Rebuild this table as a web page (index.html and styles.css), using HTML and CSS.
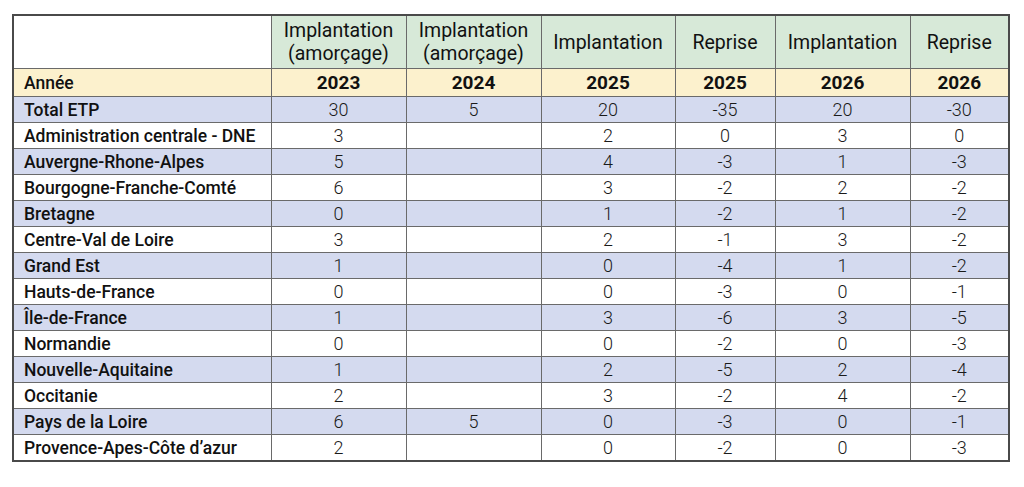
FILE: index.html
```html
<!DOCTYPE html>
<html lang="fr">
<head>
<meta charset="utf-8">
<title>ETP</title>
<link rel="stylesheet" href="styles.css">
</head>
<body>
<table class="etp">
  <colgroup>
    <col class="c-label"><col class="c-w"><col class="c-w"><col class="c-w2"><col class="c-n"><col class="c-w"><col class="c-n2">
  </colgroup>
  <tr class="head">
    <th class="blank"></th>
    <th>Implantation<br>(amorçage)</th>
    <th>Implantation<br>(amorçage)</th>
    <th>Implantation</th>
    <th>Reprise</th>
    <th>Implantation</th>
    <th>Reprise</th>
  </tr>
  <tr class="year">
    <td class="lbl">Année</td>
    <td>2023</td><td>2024</td><td>2025</td><td>2025</td><td>2026</td><td>2026</td>
  </tr>
  <tr class="alt"><td class="lbl">Total ETP</td><td>30</td><td>5</td><td>20</td><td>-35</td><td>20</td><td>-30</td></tr>
  <tr><td class="lbl">Administration centrale - DNE</td><td>3</td><td></td><td>2</td><td>0</td><td>3</td><td>0</td></tr>
  <tr class="alt"><td class="lbl">Auvergne-Rhone-Alpes</td><td>5</td><td></td><td>4</td><td>-3</td><td>1</td><td>-3</td></tr>
  <tr><td class="lbl">Bourgogne-Franche-Comté</td><td>6</td><td></td><td>3</td><td>-2</td><td>2</td><td>-2</td></tr>
  <tr class="alt"><td class="lbl">Bretagne</td><td>0</td><td></td><td>1</td><td>-2</td><td>1</td><td>-2</td></tr>
  <tr><td class="lbl">Centre-Val de Loire</td><td>3</td><td></td><td>2</td><td>-1</td><td>3</td><td>-2</td></tr>
  <tr class="alt"><td class="lbl">Grand Est</td><td>1</td><td></td><td>0</td><td>-4</td><td>1</td><td>-2</td></tr>
  <tr><td class="lbl">Hauts-de-France</td><td>0</td><td></td><td>0</td><td>-3</td><td>0</td><td>-1</td></tr>
  <tr class="alt"><td class="lbl">Île-de-France</td><td>1</td><td></td><td>3</td><td>-6</td><td>3</td><td>-5</td></tr>
  <tr><td class="lbl">Normandie</td><td>0</td><td></td><td>0</td><td>-2</td><td>0</td><td>-3</td></tr>
  <tr class="alt"><td class="lbl">Nouvelle-Aquitaine</td><td>1</td><td></td><td>2</td><td>-5</td><td>2</td><td>-4</td></tr>
  <tr><td class="lbl">Occitanie</td><td>2</td><td></td><td>3</td><td>-2</td><td>4</td><td>-2</td></tr>
  <tr class="alt"><td class="lbl">Pays de la Loire</td><td>6</td><td>5</td><td>0</td><td>-3</td><td>0</td><td>-1</td></tr>
  <tr><td class="lbl">Provence-Apes-Côte d’azur</td><td>2</td><td></td><td>0</td><td>-2</td><td>0</td><td>-3</td></tr>
</table>
</body>
</html>
```
FILE: styles.css
```css
html, body {
  margin: 0;
  padding: 0;
  background: #ffffff;
}
body {
  padding: 14px 0 0 12px;
  font-family: Roboto, "Liberation Sans", sans-serif;
  color: #1a1a1a;
}
.etp {
  border-collapse: collapse;
  table-layout: fixed;
  width: 997px;
  border: 2px solid #4a4a4a;
}
.c-label { width: 258px; }
.c-w { width: 135px; }
.c-w2 { width: 134px; }
.c-n { width: 100px; }
.c-n2 { width: 99px; }
.etp th, .etp td {
  border: 1px solid #6a6a6a;
  padding: 0;
  text-align: center;
  vertical-align: middle;
  overflow: hidden;
  white-space: nowrap;
}
.etp td {
  height: 25px;
  font-size: 18px;
  font-weight: 300;
  line-height: 20px;
}
.etp td.lbl {
  text-align: left;
  padding-left: 10px;
  font-weight: 500;
  font-size: 17.5px;
  color: #111;
}
.head th {
  height: 52px;
  background: #d7e9d8;
  font-size: 19.5px;
  font-weight: 400;
  line-height: 23px;
  color: #111;
}
.head th.blank {
  background: #ffffff;
}
.year td {
  height: 27px;
  background: #fcf1cd;
  font-weight: 700;
  font-size: 19px;
  color: #111;
}
.year td.lbl {
  font-weight: 500;
  font-size: 17.5px;
}
.alt td {
  background: #d4daef;
}
```
